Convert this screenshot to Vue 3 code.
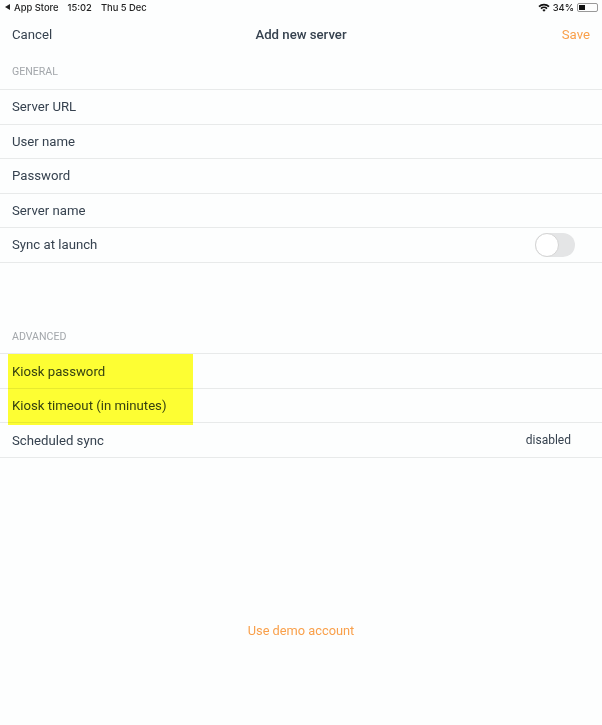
<template>
  <div class="screen">
    <div class="status-bar">
      <div class="status-left">
        <span class="back-arrow"></span>
        <span>App Store</span>
        <span class="status-time">15:02</span>
        <span class="status-date">Thu 5 Dec</span>
      </div>
      <div class="status-right">
        <svg class="wifi" width="12" height="9" viewBox="0 0 12 9">
          <path d="M0.4 3 A8 8 0 0 1 11.6 3 L10.4 4.2 A6.3 6.3 0 0 0 1.6 4.2 Z" fill="#111" />
          <path d="M2.4 5 A5.2 5.2 0 0 1 9.6 5 L8.4 6.2 A3.5 3.5 0 0 0 3.6 6.2 Z" fill="#111" />
          <path d="M4.4 7 A2.3 2.3 0 0 1 7.6 7 L6 8.7 Z" fill="#111" />
        </svg>
        <span>34%</span>
        <span class="battery"><span class="battery-level"></span></span>
      </div>
    </div>

    <div class="nav-bar">
      <span class="nav-cancel">Cancel</span>
      <span class="nav-title">Add new server</span>
      <span class="nav-save">Save</span>
    </div>

    <div class="section-label general">GENERAL</div>
    <div class="list">
      <div v-for="item in generalRows" :key="item" class="row">{{ item }}</div>
      <div class="row">
        <span>Sync at launch</span>
        <span class="toggle"><span class="knob"></span></span>
      </div>
    </div>

    <div class="section-label advanced">ADVANCED</div>
    <div class="list advanced-list">
      <div class="highlight"></div>
      <div class="row">Kiosk password</div>
      <div class="row">Kiosk timeout (in minutes)</div>
      <div class="row">
        <span>Scheduled sync</span>
        <span class="row-value">disabled</span>
      </div>
    </div>

    <div class="demo">Use demo account</div>
  </div>
</template>

<script setup>
const generalRows = ['Server URL', 'User name', 'Password', 'Server name']
</script>

<style>
html,
body {
  margin: 0;
  background: #fdfefe;
}
</style>

<style scoped>
.screen {
  width: 602px;
  height: 725px;
  overflow: hidden;
  box-sizing: border-box;
  background: #fdfefe;
  color: #36424f;
  font-family: Roboto, "Liberation Sans", sans-serif;
  font-size: 13.2px;
}

.status-bar {
  height: 14px;
  display: flex;
  align-items: center;
  justify-content: space-between;
  padding: 0 4px 0 5px;
  font-family: Inter, "Liberation Sans", sans-serif;
  font-size: 9.4px;
  font-weight: 500;
  color: #222;
}

.status-left {
  display: flex;
  align-items: center;
}

.back-arrow {
  width: 0;
  height: 0;
  margin-right: 4px;
  border-top: 3px solid transparent;
  border-bottom: 3px solid transparent;
  border-right: 5px solid #222;
}

.status-time {
  margin-left: 9px;
}

.status-date {
  margin-left: 9px;
}

.status-right {
  display: flex;
  align-items: center;
  gap: 3px;
}

.battery {
  display: block;
  width: 17px;
  height: 5px;
  border: 1px solid #999;
  border-radius: 2px;
  padding: 1px;
}

.battery-level {
  display: block;
  width: 6px;
  height: 5px;
  background: #111;
}

.nav-bar {
  height: 40px;
  display: grid;
  grid-template-columns: 1fr auto 1fr;
  align-items: center;
  padding: 0 12px;
}

.nav-title {
  font-weight: 500;
}

.nav-save {
  justify-self: end;
  color: #f9a04b;
}

.section-label {
  padding-left: 12px;
  font-size: 10.6px;
  line-height: 12px;
  color: #a3a7ab;
}

.general {
  margin-top: 12px;
  margin-bottom: 11px;
}

.advanced {
  margin-top: 68.5px;
  margin-bottom: 10px;
}

.list {
  position: relative;
  border-top: 1px solid #e8eaea;
}

.row {
  height: 33.5px;
  display: flex;
  align-items: center;
  justify-content: space-between;
  padding-left: 12px;
  padding-right: 27px;
  border-bottom: 1px solid #e8eaea;
}

.advanced-list .row {
  height: 33px;
  padding-top: 0.5px;
}

.row-value {
  padding-right: 4px;
  font-size: 12px;
}

.toggle {
  width: 40px;
  height: 24px;
  border-radius: 12px;
  background: #e4e5e6;
  display: block;
  position: relative;
}

.knob {
  position: absolute;
  left: 0;
  top: 0;
  width: 24px;
  height: 24px;
  box-sizing: border-box;
  border-radius: 50%;
  background: #fff;
  border: 1px solid #d4d4d4;
}

.highlight {
  position: absolute;
  left: 8px;
  top: 0;
  width: 185px;
  height: 70.5px;
  background: #ffff33;
  mix-blend-mode: multiply;
}

.demo {
  margin-top: 165.5px;
  text-align: center;
  line-height: 16px;
  font-size: 12.8px;
  color: #f9a04b;
}
</style>
